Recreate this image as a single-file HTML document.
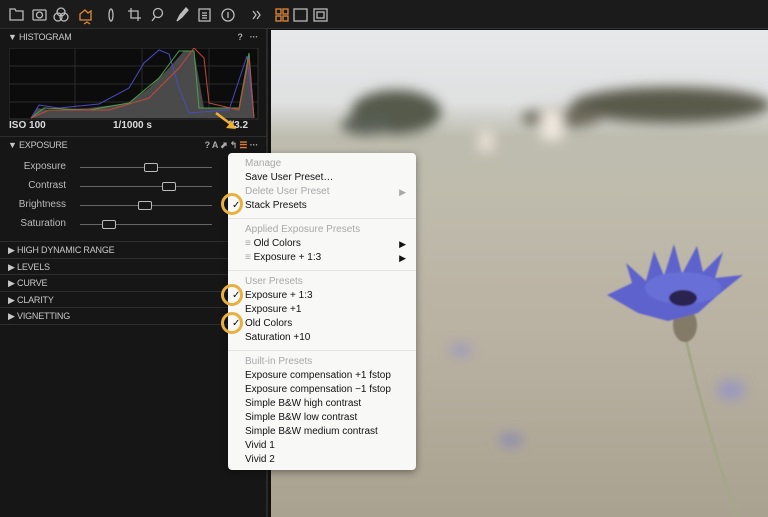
<!DOCTYPE html>
<html><head><style>
*{margin:0;padding:0;box-sizing:border-box}
body{width:768px;height:517px;overflow:hidden;background:#111;font-family:"Liberation Sans",sans-serif;position:relative}
.abs{position:absolute}
.top{left:0;top:0;width:768px;height:29px;background:#1b1b1b;border-bottom:1px solid #333}
.panel{left:0;top:29px;width:268px;height:488px;background:#161616;border-right:2px solid #2a2a2a}
.hdr{position:absolute;left:0;width:266px;height:16px;color:#c8c8c8;font-size:9px;letter-spacing:-.2px;border-top:1px solid #2d2d2d;line-height:16px;padding-left:8px}
.hdr .ic{position:absolute;right:8px;top:0;color:#aaa;font-size:9px;font-weight:bold}
.lbl{position:absolute;color:#bbb;font-size:10px;text-align:right;width:66px;left:0}
.sl{position:absolute;left:80px;width:132px;height:1px;background:#666}
.knob{position:absolute;width:14px;height:9px;border:1px solid #bbb;border-radius:2px;top:-4px;background:#161616}
.menu{left:228px;top:153px;width:188px;height:317px;background:#f8f8f7;border-radius:4px;box-shadow:0 2px 8px rgba(0,0,0,.4);font-size:10px;color:#111}
.mi{position:absolute;left:17px;line-height:14px;white-space:nowrap}
.g{color:#a8a8a8}
.sep{position:absolute;left:0;width:188px;height:1px;background:#e2e2e2}
.arr{position:absolute;right:10px;font-size:9px}
.ring{position:absolute;width:22px;height:22px;border:3px solid #e8b040;border-radius:50%}
</style></head><body>
<div class="abs top">
<svg width="360" height="29" style="position:absolute;left:0;top:0" fill="none" stroke="#bbb" stroke-width="1.3">
<path d="M10 9h5l1 2h7v9H10z"/>
<rect x="33" y="10" width="13" height="10" rx="1"/><circle cx="39.5" cy="15" r="3"/>
<circle cx="61" cy="12" r="4"/><circle cx="58" cy="17" r="4"/><circle cx="64" cy="17" r="4"/>
<path d="M80 20v-6l5-4 3 3 3-2v9z" stroke="#e08a3a"/><path d="M84 24l3-2 3 2" stroke="#e08a3a"/>
<ellipse cx="111" cy="15" rx="2" ry="6"/>
<path d="M131 8v10h10M128 11h10v10"/>
<circle cx="158" cy="13" r="4.5"/><path d="M155 17l-3 4"/>
<path d="M177 21l3-6 6-7 2 2-6 7z" fill="#bbb"/>
<rect x="199" y="9" width="11" height="12"/><path d="M202 13h5M202 15.5h5M202 18h5"/>
<circle cx="228" cy="15" r="6"/><path d="M228 12v6"/>
<path d="M253 11l3 4-3 4M257 11l3 4-3 4"/>
<rect x="276" y="9" width="5" height="5" stroke="#e08a3a"/><rect x="283" y="9" width="5" height="5" stroke="#e08a3a"/><rect x="276" y="16" width="5" height="5" stroke="#e08a3a"/><rect x="283" y="16" width="5" height="5" stroke="#e08a3a"/>
<rect x="294" y="9" width="13" height="12"/><rect x="314" y="9" width="13" height="12"/><rect x="317" y="12" width="7" height="6"/>
</svg>
</div>
<div class="abs panel">
<div class="hdr" style="top:-1px">▼ HISTOGRAM<span class="ic">?&nbsp;&nbsp; ···</span></div>
<svg width="250" height="72" style="position:absolute;left:9px;top:19px">
<rect x="0" y="0" width="249" height="71" fill="#0c0c0c" stroke="#333"/>
<path d="M66 0v71M133 0v71M200 0v71M0 18h249M0 36h249M0 54h249" stroke="#2a2a2a"/>
<path d="M22 70L28 60 40 62 80 60 120 55 140 40 160 20 175 3 185 3 195 60 230 60 240 5 245 70z" fill="#4a4a4a"/>
<path d="M22 70L30 57 50 60 90 56 120 40 135 15 150 2 160 6 170 40 180 65 220 62 238 8 245 70" stroke="#4a4ac0" fill="none"/>
<path d="M22 70L35 60 80 62 120 55 150 30 170 3 185 3 190 60 230 60 240 5 245 70" stroke="#4aa04a" fill="none"/>
<path d="M22 70L40 62 100 62 140 50 170 20 185 0 195 10 200 55 230 62 240 10 245 70" stroke="#c04a3a" fill="none"/>
</svg>
<div style="position:absolute;top:91px;left:9px;color:#ddd;font-size:10px;font-weight:bold">ISO 100</div>
<div style="position:absolute;top:91px;left:113px;color:#ddd;font-size:10px;font-weight:bold">1/1000 s</div>
<div style="position:absolute;top:91px;left:228px;color:#ddd;font-size:10px;font-weight:bold">f/3.2</div>
<svg width="30" height="20" style="position:absolute;left:214px;top:82px"><path d="M2 2l16 12" stroke="#f0b030" stroke-width="2.5"/><path d="M22 18l-10-1 6-7z" fill="#f0b030"/></svg>
<div class="hdr" style="top:107px">▼ EXPOSURE<span class="ic">? A ⬈ ↰ <b style="color:#e07a30">☰</b> ···</span></div>
<div class="lbl" style="top:132px">Exposure</div><div class="sl" style="top:138px"><div class="knob" style="left:64px"></div></div>
<div class="lbl" style="top:151px">Contrast</div><div class="sl" style="top:157px"><div class="knob" style="left:82px"></div></div>
<div class="lbl" style="top:170px">Brightness</div><div class="sl" style="top:176px"><div class="knob" style="left:58px"></div></div>
<div class="lbl" style="top:189px">Saturation</div><div class="sl" style="top:195px"><div class="knob" style="left:22px"></div></div>
<div class="hdr" style="top:212px">▶ HIGH DYNAMIC RANGE<span class="ic">? A ⬈</span></div>
<div class="hdr" style="top:229px">▶ LEVELS<span class="ic">? A ⬈</span></div>
<div class="hdr" style="top:245px">▶ CURVE<span class="ic">? ⬈</span></div>
<div class="hdr" style="top:262px">▶ CLARITY<span class="ic">? ⬈</span></div>
<div class="hdr" style="top:278px">▶ VIGNETTING<span class="ic">? ⬈</span></div>
<div style="position:absolute;top:295px;left:0;width:266px;height:1px;background:#2d2d2d"></div>
</div>
<svg class="abs" style="left:271px;top:30px" width="497" height="487">
<defs>
<linearGradient id="bg" x1="0" y1="0" x2="0" y2="1">
<stop offset="0" stop-color="#e6e8ea"/><stop offset=".15" stop-color="#dfe0e0"/><stop offset=".22" stop-color="#bdbcae"/><stop offset=".32" stop-color="#bfbcad"/><stop offset=".6" stop-color="#bab2a3"/><stop offset="1" stop-color="#aaa290"/></linearGradient>
<filter id="b"><feGaussianBlur stdDeviation="6"/></filter>
<filter id="b2"><feGaussianBlur stdDeviation="0.8"/></filter>
</defs>
<rect width="497" height="487" fill="url(#bg)"/>
<g filter="url(#b)">
<ellipse cx="125" cy="82" rx="45" ry="22" fill="#555a4c"/>
<ellipse cx="95" cy="95" rx="25" ry="10" fill="#5a5e55"/>
<ellipse cx="400" cy="75" rx="100" ry="18" fill="#5a5a4c"/>
<ellipse cx="290" cy="88" rx="40" ry="10" fill="#6e6b5c"/>
<rect x="207" y="100" width="16" height="22" fill="#e6ddd3"/>
<rect x="270" y="80" width="22" height="30" fill="#efe8de"/>
<ellipse cx="240" cy="410" rx="12" ry="6" fill="#8a88b4"/>
<ellipse cx="190" cy="320" rx="10" ry="6" fill="#9a98c0"/>
<ellipse cx="460" cy="360" rx="14" ry="10" fill="#9a98c0"/>
</g>
<path d="M414 305q20 90 52 182" stroke="#a4a888" stroke-width="3" fill="none"/>
<g filter="url(#b2)">
<ellipse cx="414" cy="295" rx="12" ry="17" fill="#847a68"/>
<path d="M336 265l25-12 -6-20 20 18 8-30 10 25 10-32 8 30 15-28 6 26 20-20 -8 26 28-3 -25 20 -20 18 -30 8 -30 -8z" fill="#5d62cc"/>
<ellipse cx="412" cy="258" rx="38" ry="16" fill="#6870d8"/>
<ellipse cx="412" cy="268" rx="14" ry="8" fill="#2a2450"/>
</g>
</svg>
<div class="abs menu">
<div class="mi g" style="top:4px">Manage</div>
<div class="mi" style="top:18px">Save User Preset…</div>
<div class="mi g" style="top:32px">Delete User Preset</div><div class="arr g" style="top:34px">▶</div>
<div class="mi" style="top:46px">Stack Presets</div><div class="mi" style="left:4px;top:46px">✓</div>
<div class="sep" style="top:65px"></div>
<div class="mi g" style="top:70px">Applied Exposure Presets</div>
<div class="mi" style="top:84px"><span class="g">≡</span> Old Colors</div><div class="arr" style="top:86px">▶</div>
<div class="mi" style="top:98px"><span class="g">≡</span> Exposure + 1:3</div><div class="arr" style="top:100px">▶</div>
<div class="sep" style="top:117px"></div>
<div class="mi g" style="top:122px">User Presets</div>
<div class="mi" style="top:136px">Exposure + 1:3</div><div class="mi" style="left:4px;top:136px">✓</div>
<div class="mi" style="top:150px">Exposure +1</div>
<div class="mi" style="top:164px">Old Colors</div><div class="mi" style="left:4px;top:164px">✓</div>
<div class="mi" style="top:178px">Saturation +10</div>
<div class="sep" style="top:197px"></div>
<div class="mi g" style="top:202px">Built-in Presets</div>
<div class="mi" style="top:216px">Exposure compensation +1 fstop</div>
<div class="mi" style="top:230px">Exposure compensation −1 fstop</div>
<div class="mi" style="top:244px">Simple B&amp;W high contrast</div>
<div class="mi" style="top:258px">Simple B&amp;W low contrast</div>
<div class="mi" style="top:272px">Simple B&amp;W medium contrast</div>
<div class="mi" style="top:286px">Vivid 1</div>
<div class="mi" style="top:300px">Vivid 2</div>
</div>
<div class="ring" style="left:221px;top:193px"></div>
<div class="ring" style="left:221px;top:284px"></div>
<div class="ring" style="left:221px;top:312px"></div>
</body></html>
